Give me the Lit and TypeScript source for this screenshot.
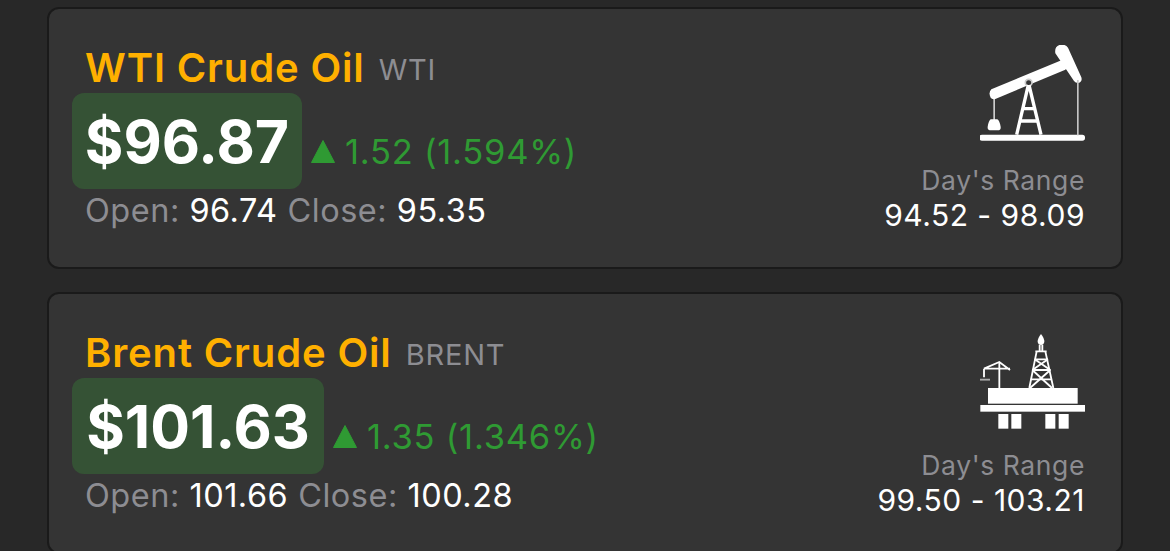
import { LitElement, html, css, svg } from "lit";
import { customElement } from "lit/decorators.js";

const pump = svg`<svg class="ico" viewBox="60 45 315 288" width="105" height="96" fill="#fff">
  <rect x="58" y="314" width="317" height="18" rx="8"/>
  <rect x="100" y="198" width="5" height="72" fill="#ccc"/>
  <path d="M92 268 H112 Q118 270 122 290 Q124 301 112 301 H94 Q81 301 83 290 Q86 272 92 268Z"/>
  <path d="M94 178 L306 90 Q318 88 324 98 Q327 112 316 119 L106 207 Q94 210 90 198 Q86 186 94 178Z"/>
  <circle cx="206" cy="158" r="10" fill="#343434" stroke="#ccc" stroke-width="5"/>
  <path d="M286 70 Q283 50 298 45 Q316 41 324 53 L364 142 Q368 156 355 159 Q346 159 342 153 Z"/>
  <path d="M205 165 L170 314 M207 165 L243 314" fill="none" stroke="#fff" stroke-width="10"/>
  <path d="M190 236 H224 M182 273 H232" fill="none" stroke="#fff" stroke-width="10"/>
  <rect x="351" y="150" width="5" height="166" fill="#c4c4c4"/>
</svg>`;

const rig = svg`<svg class="ico" viewBox="60 38 315 285" width="105" height="95" fill="#fff">
  <rect x="84" y="200" width="269" height="47"/>
  <rect x="61" y="251" width="314" height="20"/>
  <rect x="115" y="278" width="30" height="44"/>
  <rect x="154" y="278" width="30" height="44"/>
  <rect x="256" y="278" width="30" height="44"/>
  <rect x="296" y="278" width="30" height="44"/>
  <path d="M243 38 Q232 52 233 62 Q235 71 243 71 Q251 71 253 62 Q254 52 243 38Z"/>
  <g fill="none" stroke="#fff" stroke-width="5.5">
    <path d="M230 90 L208 200 M256 90 L280 200 M226 90 H260 M239 70 V90 M247 70 V90"/>
    <path d="M224 114 H264 M217 146 H271 M212 174 H276"/>
    <path d="M224 114 L271 146 M264 114 L217 146 M217 146 L276 200 M271 146 L210 200"/>
    <path d="M118 124 V200"/>
    <path d="M72 142 L118 122 L150 146 M72 142 H150 M72 142 V168"/>
    <path d="M60 175 H90" stroke="#aaa"/>
  </g>
</svg>`;

@customElement("app-root")
export class AppRoot extends LitElement {
  static styles = css`
    :host {
      display: block;
      width: 1170px;
      height: 551px;
      overflow: hidden;
      background: #282828;
      font-family: Inter, "Liberation Sans", sans-serif;
    }
    .list {
      display: flex;
      flex-direction: column;
      gap: 23px;
      padding: 7px 47px 0;
    }
    .card {
      box-sizing: border-box;
      height: 262px;
      flex: none;
      display: flex;
      justify-content: space-between;
      padding: 0 36px 0 37px;
      background: #343434;
      border: 2px solid #1a1a1a;
      border-radius: 12px;
    }
    .left {
      display: flex;
      flex-direction: column;
      padding-top: 34px;
    }
    .title {
      display: flex;
      align-items: flex-start;
      gap: 14px;
      height: 50px;
      line-height: 50px;
      margin-left: -1px;
    }
    .name {
      color: #ffb000;
      font-size: 40px;
      font-weight: 600;
      letter-spacing: 0.85px;
    }
    .sym {
      color: #8d8d92;
      font-size: 29px;
      letter-spacing: 0.8px;
      margin-top: 2px;
    }
    .row {
      display: flex;
      align-items: center;
      margin-left: -14px;
    }
    .price {
      display: flex;
      align-items: center;
      justify-content: center;
      height: 96px;
      width: var(--w);
      background: #355235;
      border-radius: 12px;
      color: #fff;
      font-size: 59px;
      font-weight: 700;
      letter-spacing: 0;
    }
    .chg {
      display: flex;
      align-items: center;
      gap: 10px;
      margin: 21px 0 0 9px;
      color: #2f9a33;
      font-size: 34.5px;
      letter-spacing: 0.75px;
    }
    .tri {
      width: 24px;
      height: 25px;
      fill: #2f9a33;
    }
    .stats {
      display: flex;
      gap: 10px;
      font-size: 32.5px;
      line-height: 40px;
      color: #fff;
      letter-spacing: 0.5px;
      margin: 2px 0 0 -1px;
    }
    .lbl {
      color: #8d8d92;
    }
    .right {
      display: flex;
      flex-direction: column;
      align-items: flex-end;
    }
    .ico {
      display: block;
    }
    .pump {
      margin-top: 36px;
    }
    .oil {
      margin-top: 40px;
    }
    .range {
      color: #8d8d92;
      font-size: 26.5px;
      line-height: 36px;
      letter-spacing: 0.6px;
    }
    .pump + .range {
      margin-top: 21px;
    }
    .oil + .range {
      margin-top: 18px;
    }
    .vals {
      color: #fff;
      font-size: 30px;
      line-height: 34px;
      letter-spacing: 0.5px;
    }
  `;

  private card(name: string, sym: string, price: string, w: number, chg: string, open: string, close: string, range: string, icon: unknown, cls: string) {
    return html`<section class="card">
      <div class="left">
        <div class="title"><span class="name">${name}</span><span class="sym">${sym}</span></div>
        <div class="row">
          <div class="price" style="--w:${w}px">${price}</div>
          <div class="chg">
            <svg class="tri" viewBox="0 0 24 24"><path d="M12 1 L23.5 23 H.5 Z" stroke="#2f9a33" stroke-linejoin="round"/></svg>
            <span>${chg}</span>
          </div>
        </div>
        <div class="stats">
          <span><span class="lbl">Open:</span> ${open}</span>
          <span><span class="lbl">Close:</span> ${close}</span>
        </div>
      </div>
      <div class="right">
        <div class=${cls}>${icon}</div>
        <div class="range">Day's Range</div>
        <div class="vals">${range}</div>
      </div>
    </section>`;
  }

  render() {
    return html`<div class="list">
      ${this.card("WTI Crude Oil", "WTI", "$96.87", 230, "1.52 (1.594%)", "96.74", "95.35", "94.52 - 98.09", pump, "pump")}
      ${this.card("Brent Crude Oil", "BRENT", "$101.63", 252, "1.35 (1.346%)", "101.66", "100.28", "99.50 - 103.21", rig, "oil")}
    </div>`;
  }
}
